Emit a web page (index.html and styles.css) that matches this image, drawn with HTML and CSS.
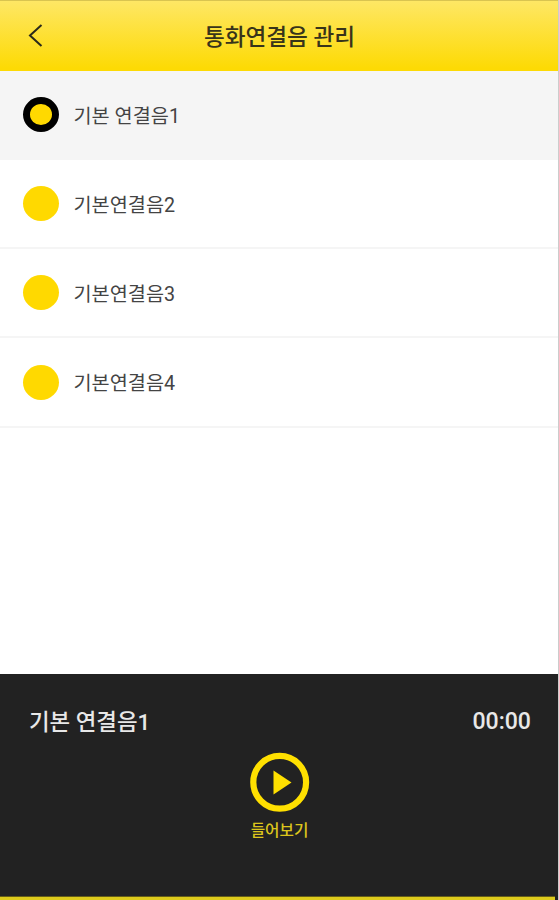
FILE: index.html
```html
<!DOCTYPE html>
<html lang="ko">
<head>
  <meta charset="UTF-8">
  <title>통화연결음 관리</title>
  <link rel="stylesheet" href="styles.css">
</head>
<body>
  <div class="app">
    <header class="header">
      <button class="back" aria-label="뒤로">
        <svg width="16" height="24" viewBox="0 0 16 24"><path d="M14.5 1 L3 11.5 L14.5 22" fill="none" stroke="#2b2a1a" stroke-width="2"/></svg>
      </button>
      <h1>통화연결음 관리</h1>
    </header>
    <ul class="list">
      <li class="item selected"><span class="radio"></span><span class="name">기본 연결음1</span></li>
      <li class="item"><span class="radio"></span><span class="name">기본연결음2</span></li>
      <li class="item"><span class="radio"></span><span class="name">기본연결음3</span></li>
      <li class="item"><span class="radio"></span><span class="name">기본연결음4</span></li>
    </ul>
    <div class="player">
      <div class="info">
        <span class="track">기본 연결음1</span>
        <span class="time">00:00</span>
      </div>
      <button class="play">
        <svg width="60" height="60" viewBox="0 0 60 60">
          <circle cx="29.7" cy="30.3" r="26.4" fill="none" stroke="#ffe000" stroke-width="6.2"/>
          <path d="M23.5 18.5 L41.5 30.5 L23.5 42.5 Z" fill="#ffe000"/>
        </svg>
        <span>들어보기</span>
      </button>
      <div class="progress"></div>
    </div>
  </div>
</body>
</html>
```

FILE: styles.css
```css
* { box-sizing: border-box; margin: 0; padding: 0; }
body { font-family: Roboto, "Noto Sans CJK KR", sans-serif; background: #fff; }
button { background: none; border: none; font-family: inherit; }
svg { display: block; }
.app { display: flex; flex-direction: column; height: 900px; border-right: 1px solid #ccc; overflow: hidden; }

.header { display: grid; grid-template-columns: 60px 1fr 60px; align-items: center; height: 71px; margin-right: -1px; border-top: 1px solid #d9c450; border-right: 1px solid #d9bd20; background: linear-gradient(#fee765, #fdda04 96%); }
.back { padding-left: 27px; }
h1 { padding: 3px 0 0 1px; text-align: center; font-size: 22.6px; line-height: 34px; font-weight: 500; color: #38341a; }

.list { flex: 1; list-style: none; }
.item { display: flex; align-items: center; height: 89.1px; padding-left: 23px; border-bottom: 2px solid #f5f5f5; }
.item:last-child { height: 90px; }
.selected { background: #f5f5f5; }
.radio { width: 36px; height: 35px; border-radius: 50%; background: #ffd900; }
.selected .radio { border: 7px solid #000; }
.name { margin-left: 14.5px; padding-top: 4px; font-size: 19.7px; line-height: 30px; color: #444; }

.player { display: flex; flex-direction: column; align-items: center; height: 226px; margin-right: -1px; background: #222; }
.info { display: flex; justify-content: space-between; align-items: center; width: 100%; height: 34px; margin-top: 30px; padding: 0 28px 0 29px; font-size: 22.4px; line-height: 34px; color: #e8e8e8; }
.track { padding-top: 2px; font-weight: 500; }
.time { padding-top: 2px; font-size: 23.1px; font-weight: 500; }
.play { display: flex; flex-direction: column; align-items: center; margin-top: 14px; color: #dcc61c; }
.play span { margin-top: 7px; font-size: 15.7px; line-height: 24px; font-weight: 500; }
.progress { align-self: flex-start; width: 555px; height: 4px; margin-top: auto; background: #decb1c; border-top: 1px solid #655d18; }
```
